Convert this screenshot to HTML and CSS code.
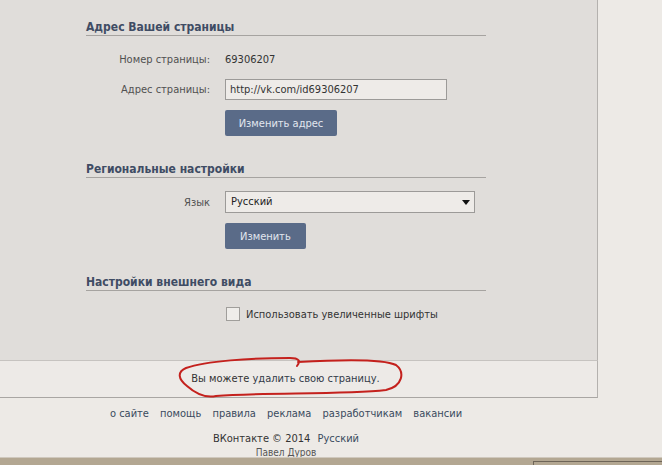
FILE: index.html
```html
<!DOCTYPE html>
<html lang="ru">
<head>
  <meta charset="UTF-8" />
  <title>Настройки</title>
  <link rel="stylesheet" href="styles.css">
</head>
<body>
  <div class="page">
    <div class="settings">
      <div class="section">
        <div class="section-title">Адрес Вашей страницы</div>
        <div class="rows">
          <div class="row">
            <div class="label">Номер страницы:</div>
            <div class="value">69306207</div>
          </div>
          <div class="row">
            <div class="label">Адрес страницы:</div>
            <input class="text-input" type="text" value="http://vk.com/id69306207">
          </div>
          <div class="row">
            <div class="label"></div>
            <button class="btn btn-wide">Изменить адрес</button>
          </div>
        </div>
      </div>

      <div class="section">
        <div class="section-title">Региональные настройки</div>
        <div class="rows">
          <div class="row">
            <div class="label">Язык</div>
            <div class="select">Русский<span class="arrow"></span></div>
          </div>
          <div class="row">
            <div class="label"></div>
            <button class="btn">Изменить</button>
          </div>
        </div>
      </div>

      <div class="section">
        <div class="section-title">Настройки внешнего вида</div>
        <div class="rows">
          <div class="row">
            <div class="label"></div>
            <span class="checkbox"></span>
            <span class="check-label">Использовать увеличенные шрифты</span>
          </div>
        </div>
      </div>
    </div>

    <div class="delete-band">
      Вы можете <a href="#" class="link">удалить свою страницу.</a>
    </div>

    <div class="footer">
      <div class="footer-links">
        <a href="#">о сайте</a>
        <a href="#">помощь</a>
        <a href="#">правила</a>
        <a href="#">реклама</a>
        <a href="#">разработчикам</a>
        <a href="#">вакансии</a>
      </div>
      <div class="footer-copy">ВКонтакте © 2014 <a href="#">Русский</a></div>
      <div class="footer-author">Павел Дуров</div>
    </div>
  </div>

  <div class="taskbar"><div class="taskbar-item"></div></div>

  <!-- red marker circle drawn over the screenshot -->
  <svg class="marker" width="662" height="465" viewBox="0 0 662 465">
    <path d="M297 366 C301 361 299 358 290 358 C250 358 206 361 186 368 C177 372 178 379 187 386 C196 394 206 398 216 396 C262 392 342 395 386 390 C403 386 405 372 396 365 C382 358 332 360 298 362"
          fill="none" stroke="#c4211d" stroke-width="2" stroke-linecap="round"/>
  </svg>
</body>
</html>
```

FILE: styles.css
```css
body {
  margin: 0;
  background: #edeae6;
  font-family: "DejaVu Sans Condensed", "DejaVu Sans", Tahoma, sans-serif;
  font-stretch: condensed;
  font-size: 11px;
  color: #333;
  height: 465px;
  overflow: hidden;
  position: relative;
}

a {
  color: #3a4a5e;
  text-decoration: none;
}

.page {
  width: 624px;
  margin-left: -26px;
}

.settings {
  background: #e0ddda;
  border-right: 1px solid #b4b1ae;
  border-bottom: 1px solid #c6c3c0;
  padding: 19px 0 36px;
}

.section {
  margin-left: 112px;
  width: 400px;
}

.section + .section {
  margin-top: 25px;
}

.section-title {
  font-weight: bold;
  font-size: 12px;
  line-height: 16px;
  color: #3f4c64;
  border-bottom: 1px solid #a6a3a0;
}

.rows {
  display: flex;
  flex-direction: column;
  gap: 10px;
  padding-top: 13px;
}

.row {
  display: flex;
  align-items: center;
  min-height: 20px;
}

.label {
  width: 124px;
  padding-right: 15px;
  text-align: right;
  color: #505050;
  flex-shrink: 0;
}

.value {
  color: #333;
}

.text-input {
  width: 222px;
  height: 21px;
  box-sizing: border-box;
  padding: 0 4px;
  border: 1px solid #9c9a98;
  background: #eeebe8;
  font-family: inherit;
  font-stretch: condensed;
  font-size: 11px;
  color: #333;
  margin: 0;
}

.btn {
  height: 26px;
  padding: 0 15px;
  border: none;
  border-radius: 2px;
  background: #5a6b88;
  color: #e2e7ef;
  font-family: inherit;
  font-stretch: condensed;
  font-size: 11px;
  cursor: pointer;
}

.btn-wide {
  width: 112px;
  padding: 0;
}

.select {
  position: relative;
  width: 250px;
  height: 22px;
  box-sizing: border-box;
  padding: 0 5px;
  line-height: 20px;
  border: 1px solid #9c9a98;
  background: #eeebe8;
  color: #222;
}

.arrow {
  position: absolute;
  right: 4px;
  top: 8px;
  border-left: 4px solid transparent;
  border-right: 4px solid transparent;
  border-top: 5px solid #111;
}

.checkbox {
  width: 12px;
  height: 12px;
  border: 1px solid #a09e9b;
  background: #efedea;
  margin-left: 1px;
  margin-right: 6px;
}

.check-label {
  color: #333;
}

.delete-band {
  height: 36px;
  line-height: 36px;
  text-align: center;
  background: #edeae7;
  border-right: 1px solid #b4b1ae;
  border-bottom: 1px solid #a9a6a3;
  color: #333;
}

.delete-band .link {
  color: #333a48;
}

.footer {
  text-align: center;
  padding-top: 8px;
}

.footer-links {
  line-height: 15px;
}

.footer-links a {
  margin: 0 4px;
}

.footer-copy {
  margin-top: 10px;
  line-height: 15px;
  color: #333;
}

.footer-copy a {
  margin-left: 4px;
}

.footer-author {
  font-size: 10px;
  line-height: 14px;
  color: #555;
}

.taskbar {
  position: absolute;
  left: 0;
  right: 0;
  bottom: 0;
  height: 7px;
  border-top: 1px solid #cfc8bd;
  background: #b3a792;
}

.taskbar-item {
  margin-left: 533px;
  margin-top: 3px;
  height: 10px;
  border-top: 1px solid #6e6558;
  border-left: 1px solid #6e6558;
}

.marker {
  position: absolute;
  left: 0;
  top: 0;
  pointer-events: none;
}
```
